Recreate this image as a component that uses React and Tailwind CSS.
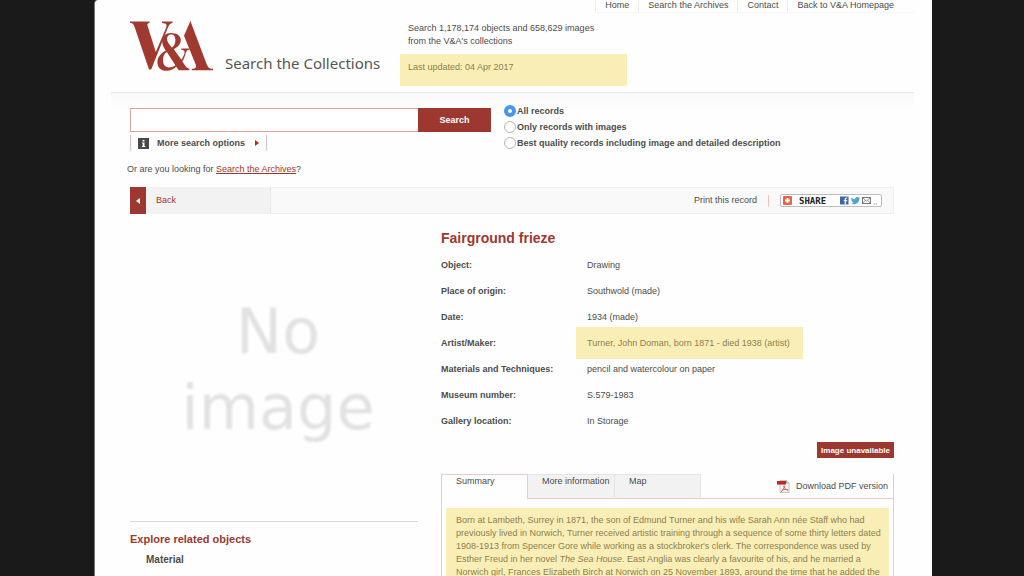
const NAV = ["Home", "Search the Archives", "Contact", "Back to V&A Homepage"];

const RECORD = [
  ["Object:", "Drawing"],
  ["Place of origin:", "Southwold (made)"],
  ["Date:", "1934 (made)"],
  ["Artist/Maker:", "Turner, John Doman, born 1871 - died 1938 (artist)"],
  ["Materials and Techniques:", "pencil and watercolour on paper"],
  ["Museum number:", "S.579-1983"],
  ["Gallery location:", "In Storage"],
];

const FILTERS = [
  "All records",
  "Only records with images",
  "Best quality records including image and detailed description",
];

function Logo() {
  return (
    <svg
      role="img"
      aria-label="V&A"
      viewBox="0 0 83 50"
      className="h-[50px] w-[83px] shrink-0"
      fill="#a03a31"
    >
      <path d="M0 0.5H19.5V2C17.4 2.2 17 3.2 17.6 5L25.8 31L36 7C37.4 3.6 36.4 2.4 32 2V0.5H42.5V2C40.2 2.3 39.2 3.4 37.8 6.8L21.2 48.5H19L4.6 6C3.6 3 2.8 2.2 0 2Z" />
      <path d="M60.4 0L76.6 43C78 46.6 79.4 47.6 83 47.8V49.2H61.8V47.8C66.2 47.4 66.6 46.2 65.6 43.2L54 14.8Z" />
      <path
        fillRule="evenodd"
        d="M41 12C47 12 50.8 14.8 50.8 19C50.8 23.2 47.6 26 43.8 28.2L51.4 38.8C53.4 35.8 54.6 33.2 54.6 31C54.6 29.6 53.6 29 51.2 28.8V27.4H59.4V28.8C57.2 29 56.4 30.2 55.6 32.4C54.8 35.4 53.8 38 52.4 40.4C54.6 44 56.6 47 59.4 47.8V49.2H48.8L46.2 45.8C43.4 48.4 40.4 49.8 36.4 49.8C30.8 49.8 27.4 46.4 27.4 41.2C27.4 36 31 32.4 35.8 29.6C33.6 26.2 32.2 23.4 32.2 20.4C32.2 15.4 35.6 12 41 12ZM41.8 26.4C44.2 24.8 45.4 22.6 45.4 19.2C45.4 15.6 44 13.6 41.2 13.6C38.6 13.6 37 15.2 37 17.8C37 20.8 39 23.2 41.8 26.4ZM36.8 31C34 33 33 35.6 33 39C33 43.8 35.4 46.4 39.2 46.4C41.8 46.4 43.8 45.6 45.4 44.2Z"
      />
    </svg>
  );
}

function ShareButton() {
  return (
    <button
      type="button"
      className="flex h-[13px] w-[102px] items-center rounded-xs border border-[#bdbdbd] bg-white px-0.5"
    >
      <svg viewBox="0 0 9 9" className="h-[9px] w-[9px] shrink-0" aria-hidden="true">
        <rect width="9" height="9" rx="1" fill="#ea6444" />
        <path d="M4.5 2V7M2 4.5H7" stroke="#fff" strokeWidth="1.8" />
      </svg>
      <span className="ml-[7px] font-['DejaVu_Sans_Mono',monospace] text-[9px] leading-[10px] font-bold text-[#222]">
        SHARE
      </span>
      <svg viewBox="0 0 39 9" className="ml-auto h-[9px] w-[39px] shrink-0" aria-hidden="true">
        <rect x="0" y="0.5" width="8.5" height="8" fill="#3c66a8" />
        <path d="M7.3 2H6.4C5.6 2 5.3 2.4 5.3 3.1V8.5M3.8 4.6H7.2" stroke="#fff" strokeWidth="1.2" fill="none" />
        <path
          d="M11.3 1.6C12.3 2.8 13.6 3.3 15.1 3.3C14.9 1.8 16 0.9 17.1 0.9C17.7 0.9 18.1 1.1 18.5 1.5L19.8 1.1L19.1 2.2L20 2.1L19.2 3C19.2 6 17 8.2 14.1 8.2C13 8.2 12 7.9 11.2 7.4C12.2 7.4 13 7.2 13.7 6.7C12.8 6.6 12.2 6.1 12 5.4H12.7C11.8 5.1 11.2 4.5 11.2 3.5L11.9 3.7C11.1 3.1 10.9 2.3 11.3 1.6Z"
          fill="#4aa3da"
        />
        <rect x="22.5" y="1.5" width="8" height="6" fill="#fff" stroke="#777" />
        <path d="M22.5 1.7L26.5 5L30.5 1.7M22.6 7.3L25.4 4.2M30.4 7.3L27.6 4.2" stroke="#777" strokeWidth="0.8" fill="none" />
        <path d="M33.5 8H37.5" stroke="#999" strokeDasharray="1.5 0.6" />
      </svg>
    </button>
  );
}

function PdfIcon() {
  return (
    <svg viewBox="0 0 13 13" className="h-[13px] w-[13px]" aria-hidden="true">
      <path d="M3 0.5H9.5L12 3V12.5H3Z" fill="#fbfbfb" stroke="#b5b5b5" strokeWidth="0.8" />
      <path d="M9.5 0.5V3H12" fill="#ddd" stroke="#888" strokeWidth="0.7" />
      <rect x="0" y="1" width="9" height="3.6" fill="#c22b22" />
      <path
        d="M4.2 11.6C5.8 10.5 7.4 7.8 7.3 5.8C7 5.2 6.6 5.8 7 6.8C7.6 8.6 9.2 10.2 11 10.2C11.6 9.6 9 9.2 7.2 9.6C5.8 9.9 4.4 10.6 4.2 11.6Z"
        fill="none"
        stroke="#d8453c"
        strokeWidth="0.8"
      />
    </svg>
  );
}

export default function App() {
  return (
    <div className="h-screen overflow-hidden bg-[#1a1a1a] pr-[92px] pl-[94px] font-['Liberation_Sans',Arial,sans-serif] text-[9px] leading-[13px] text-[#4c4c4c]">
      <div className="min-h-full rounded-tl-sm border-l border-[#777] bg-[#fefefe] pr-[18px] pl-4">
        <header className="border-b border-[#e8e8e8]">
          <nav className="flex h-[13px] justify-end">
            {NAV.map((item, i) => (
              <a
                key={item}
                href="#"
                className={
                  "border-b border-l border-[#ececec] border-b-[#f6f6f6] pl-[9px] leading-[10px] whitespace-nowrap " +
                  (i === NAV.length - 1 ? "pr-5" : "pr-[9px]")
                }
              >
                {item}
              </a>
            ))}
          </nav>
          <div className="flex h-[79px]">
            <div className="flex w-[289px] shrink-0 items-start pt-2 pl-[19px]">
              <Logo />
              <h1 className="mt-8 ml-3 font-['Noto_Sans',sans-serif] text-[15px] leading-5 whitespace-nowrap text-[#555]">
                Search the Collections
              </h1>
            </div>
            <div className="w-[227px] pt-[9px]">
              <p className="px-2">
                Search 1,178,174 objects and 658,629 images
                <br />
                from the V&amp;A's collections
              </p>
              <p className="mt-1.5 h-8 bg-[#faeeb7] px-2 pt-[7px] text-[#8c7f4e]">
                Last updated: 04 Apr 2017
              </p>
            </div>
          </div>
        </header>

        <main className="bg-linear-to-b from-[#f8f8f8] to-[#fefefe] to-[16px] pr-5 pl-[19px]">
          <form className="flex pt-2.5" onSubmit={(e) => e.preventDefault()}>
            <div className="w-[361px] shrink-0 pt-[5px]">
              <div className="flex h-6">
                <input
                  type="text"
                  aria-label="Search the collections"
                  className="h-full min-w-0 flex-1 border border-r-0 border-[#d9a29d] bg-white px-2 outline-none"
                />
                <button type="submit" className="h-full w-[73px] bg-[#9c382f] font-bold text-white">
                  Search
                </button>
              </div>
              <button
                type="button"
                className="mt-[3px] flex h-4 w-[137px] items-center border-x border-[#dcc0bd] px-[7px] font-bold"
              >
                <svg viewBox="0 0 11 11" className="h-[11px] w-[11px]" aria-hidden="true">
                  <rect width="11" height="11" fill="#484848" />
                  <path d="M4.5 2H6.5V3.5H4.5ZM4 4.5H6.5V8H7.3V9H3.8V8H4.7V5.4H4Z" fill="#fff" />
                </svg>
                <span className="ml-2">More search options</span>
                <svg viewBox="0 0 4 6" className="ml-auto h-1.5 w-1" aria-hidden="true">
                  <path d="M0 0L4 3L0 6Z" fill="#b3271c" />
                </svg>
              </button>
            </div>
            <fieldset className="ml-[13px]">
              {FILTERS.map((label, i) => (
                <label key={label} className="flex h-4 items-center gap-px font-bold whitespace-nowrap">
                  <input
                    type="radio"
                    name="filter"
                    defaultChecked={i === 0}
                    className="h-3 w-3 appearance-none rounded-full border border-[#b5b5b5] bg-white checked:border-4 checked:border-[#4795ee]"
                  />
                  {label}
                </label>
              ))}
            </fieldset>
          </form>

          <p className="-ml-[3px] pt-3">
            Or are you looking for{" "}
            <a href="#" className="text-[#9c382f] underline">
              Search the Archives
            </a>
            ?
          </p>

          <div className="mt-[11px] flex h-[27px] items-stretch border border-l-0 border-[#efefef] bg-[#f9f9f9]">
            <a href="#" className="-my-px flex w-[141px] items-center border-r border-[#e8e8e8] bg-[#f2f2f2] text-[#9c382f]">
              <span className="flex h-full w-4 items-center justify-center bg-[#9c382f]">
                <svg viewBox="0 0 4 6" className="h-1.5 w-1" aria-hidden="true">
                  <path d="M4 0L0 3L4 6Z" fill="#fff" />
                </svg>
              </span>
              <span className="ml-2.5">Back</span>
            </a>
            <div className="ml-auto flex items-center pr-[11px]">
              <a href="#">Print this record</a>
              <span className="mr-[11px] ml-[11px] h-3 w-px bg-[#f0c4b8]" />
              <ShareButton />
            </div>
          </div>

          <div className="flex gap-[23px]">
            <aside className="w-[288px] shrink-0">
              <div className="h-[308px] border-b border-[#dadada] pt-[80px] pl-2 text-center font-['DejaVu_Sans',sans-serif] text-[62px] leading-[76px] text-[#e2e2e2]">
                <p className="blur-[1px]">
                  No
                  <br />
                  image
                </p>
              </div>
              <h2 className="mt-2.5 text-[11px] leading-[14px] font-bold text-[#9c382f]">
                Explore related objects
              </h2>
              <h3 className="mt-[7px] pl-4 text-[10px] font-bold">Material</h3>
            </aside>

            <section className="min-w-0 flex-1 pt-[15px]">
              <h2 className="text-[14px] leading-[18px] font-bold text-[#9c382f]">Fairground frieze</h2>
              <table className="mt-[5px] w-full text-left">
                <tbody>
                  {RECORD.map(([name, value]) => (
                    <tr key={name} className="h-[26px]">
                      <th scope="row" className="w-[146px] p-0 font-bold">
                        {name}
                      </th>
                      <td className="relative p-0">
                        {name === "Artist/Maker:" && (
                          <span className="absolute -inset-y-[3px] -left-[11px] w-[227px] bg-[#faeeb7]" />
                        )}
                        <span className={name === "Artist/Maker:" ? "relative text-[#8c7f4e]" : ""}>
                          {value}
                        </span>
                      </td>
                    </tr>
                  ))}
                </tbody>
              </table>
              <div className="mt-2 flex justify-end">
                <button
                  type="button"
                  className="h-4 bg-[#9c382f] px-1 text-[8px] font-bold whitespace-nowrap text-white"
                >
                  Image unavailable
                </button>
              </div>

              <div className="mt-4 border-x border-[#e9cbc8]">
                <div className="flex h-[25px]">
                  <div role="tablist" className="flex">
                    <button
                      role="tab"
                      aria-selected="true"
                      className="flex w-[86px] items-start border-t border-r border-[#e9cbc8] pl-3.5"
                    >
                      Summary
                    </button>
                    <button
                      role="tab"
                      aria-selected="false"
                      className="flex w-[87px] items-start border-t border-r border-b border-[#e4e4e4] border-b-[#e9cbc8] bg-[#f2f2f2] pl-3.5 whitespace-nowrap"
                    >
                      More information
                    </button>
                    <button
                      role="tab"
                      aria-selected="false"
                      className="flex w-[86px] items-start border-t border-r border-b border-[#e4e4e4] border-b-[#e9cbc8] bg-[#f2f2f2] pl-3.5"
                    >
                      Map
                    </button>
                  </div>
                  <a
                    href="#"
                    className="flex flex-1 items-center justify-end gap-1.5 border-b border-[#e9cbc8] pr-[5px] whitespace-nowrap"
                  >
                    <PdfIcon />
                    Download PDF version
                  </a>
                </div>
                <div className="px-1 pt-[9px]">
                  <p className="bg-[#faeeb7] px-2.5 pt-1.5 pb-2 whitespace-nowrap text-[#8c7f4e]">
                    Born at Lambeth, Surrey in 1871, the son of Edmund Turner and his wife Sarah Ann née Staff who had
                    <br />
                    previously lived in Norwich, Turner received artistic training through a sequence of some thirty letters dated
                    <br />
                    1908-1913 from Spencer Gore while working as a stockbroker's clerk. The correspondence was used by
                    <br />
                    Esther Freud in her novel <i>The Sea House</i>. East Anglia was clearly a favourite of his, and he married a
                    <br />
                    Norwich girl, Frances Elizabeth Birch at Norwich on 25 November 1893, around the time that he added the
                  </p>
                </div>
              </div>
            </section>
          </div>
        </main>
      </div>
    </div>
  );
}
